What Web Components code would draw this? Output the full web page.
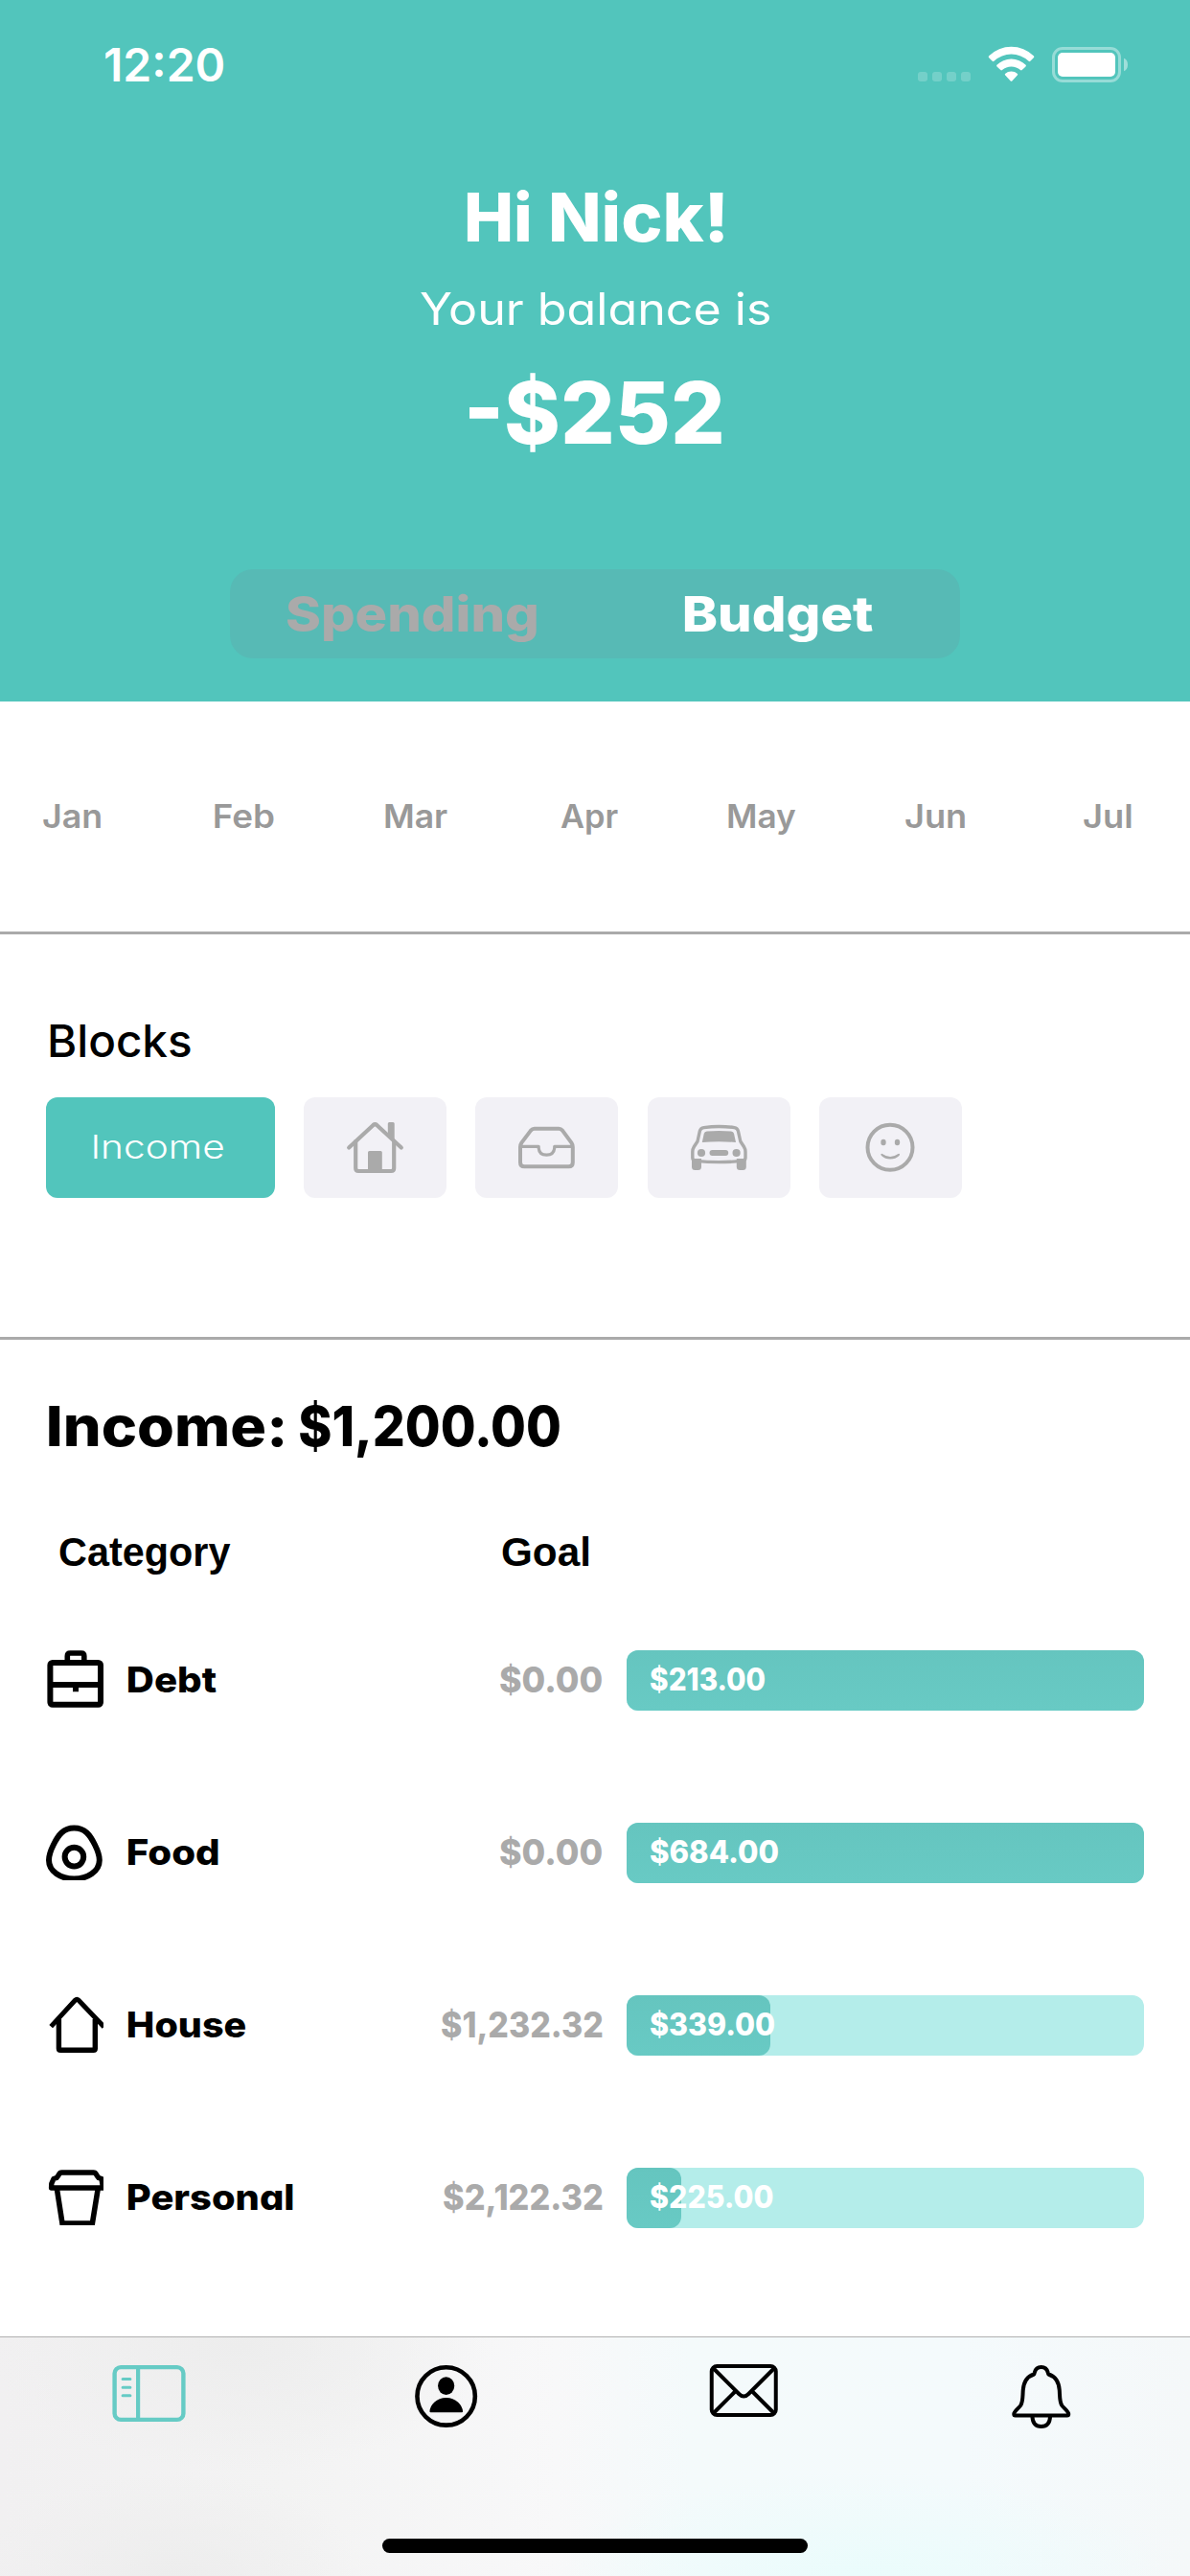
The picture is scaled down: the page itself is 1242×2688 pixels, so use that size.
<!DOCTYPE html>
<html lang="en">
<head>
<meta charset="utf-8">
<title>Budget</title>
<style>
html,body{margin:0;padding:0;background:#fff}
body{width:1242px;height:2688px;overflow:hidden;font-family:Inter,"Liberation Sans",sans-serif;color:#000}
</style>
</head>
<body>
<budget-app></budget-app>
<script>
const define = (name, html, setup) => customElements.define(name, class extends HTMLElement {
  constructor() {
    super();
    this.attachShadow({ mode: "open" });
  }
  connectedCallback() {
    const t = document.createElement("template");
    t.innerHTML = typeof html === "function" ? html(this) : html;
    this.shadowRoot.replaceChildren(t.content.cloneNode(true));
    if (setup) setup(this);
  }
});

/* One line of text whose drawn width is set by the "w" attribute. */
const ruler = document.createElement("canvas").getContext("2d");
const fontOf = el => ({
  size: +el.getAttribute("size"), weight: el.getAttribute("weight") || 400,
  family: el.getAttribute("family") || "Inter", w: +el.getAttribute("w")
});
define("fit-text", el => {
  const { size, weight, family, w } = fontOf(el);
  return `<style>
    :host{display:block;flex:none;width:${w}px;height:${size}px}
    span{display:block;width:max-content;white-space:nowrap;font:${weight} ${size}px/${size}px "${family}","Liberation Sans",sans-serif;
      font-feature-settings:${el.hasAttribute("geo") ? '"cv11"' : "normal"};transform-origin:0 0}
  </style><span>${el.getAttribute("text")}</span>`;
}, el => {
  const { size, weight, family, w } = fontOf(el);
  const span = el.shadowRoot.querySelector("span");
  ruler.font = `${weight} ${size}px "${family}"`;
  const m = ruler.measureText(el.getAttribute("text"));
  const advance = span.getBoundingClientRect().width || m.width;
  const k = w / (m.actualBoundingBoxRight + m.actualBoundingBoxLeft + advance - m.width);
  span.style.transform = `translateX(${m.actualBoundingBoxLeft * k}px) scaleX(${k})`;
});

define("status-bar", `<style>
  :host{display:flex;width:1242px;height:100px;box-sizing:border-box;padding:44px 65px 0 109.5px;justify-content:space-between;align-items:flex-start}
  svg{display:block}
  </style>
  <fit-text text="12:20" size="47.5" weight="600" w="123"></fit-text>
  <svg width="219" height="46" viewBox="958 44 219 46">
    <g fill="#fff" fill-opacity=".2"><rect x="958" y="75" width="10" height="10" rx="3"/><rect x="973" y="75" width="10" height="10" rx="3"/><rect x="988" y="75" width="10" height="10" rx="3"/><rect x="1003" y="75" width="10" height="10" rx="3"/></g>
    <g fill="#fff">
      <path d="M1032.2 58.2Q1031.2 59.2 1032.2 60.2L1035.7 63.8Q1036.5 64.6 1037.4 63.7A26.5 26.5 0 0 1 1073.6 63.7Q1074.5 64.6 1075.3 63.8L1078.8 60.2Q1079.8 59.2 1078.8 58.2A33.5 33.5 0 0 0 1032.2 58.2Z"/>
      <path d="M1040.4 67.8Q1039.7 68.6 1040.5 69.4L1044.3 73.1Q1045.1 73.9 1046 73.1A14.5 14.5 0 0 1 1065 73.1Q1065.9 73.9 1066.7 73.1L1070.5 69.4Q1071.3 68.6 1070.6 67.8A21.5 21.5 0 0 0 1040.4 67.8Z"/>
      <path d="M1049 77Q1048.4 77.8 1049.2 78.5L1054.7 84.4Q1055.5 85.2 1056.3 84.4L1061.8 78.5Q1062.6 77.8 1062 77A10 10 0 0 0 1049 77Z"/>
      <rect x="1104" y="55" width="60" height="25" rx="5"/>
      <path fill-opacity=".45" d="M1173 60.7Q1177 62.5 1177 67.5Q1177 72.5 1173 74.3Z"/>
    </g>
    <rect x="1099.5" y="50.5" width="69" height="34" rx="9.5" fill="none" stroke="#fff" stroke-opacity=".4" stroke-width="3"/>
  </svg>`);

define("segment-control", `<style>
  :host{display:flex;width:762px;height:93px;border-radius:24px;background:#57bab5}
  div{flex:1;display:flex;align-items:center;justify-content:center;color:#fff}
  .off{color:#aaa;padding-right:3px}
  </style><div class="off"><fit-text geo text="Spending" size="51" weight="800" w="261"></fit-text></div>
  <div><fit-text geo text="Budget" size="51" weight="800" w="197"></fit-text></div>`);

define("balance-header", `<style>
  :host{display:flex;flex-direction:column;align-items:center;height:732px;background:#52c5bc;color:#fff}
  .hi{display:flex;gap:22px;margin-top:91.5px}.label{margin-top:37.2px}.sum{margin-top:41.8px}segment-control{margin-top:118.5px}
  </style><status-bar></status-bar>
  <div class="hi"><fit-text text="Hi" size="70" weight="800" w="66"></fit-text>
  <fit-text text="Nick!" size="70" weight="800" w="180.5"></fit-text></div>
  <fit-text class="label" geo text="Your balance is" size="46" weight="400" w="364"></fit-text>
  <fit-text class="sum" geo text="-$252" size="89" weight="800" w="263"></fit-text>
  <segment-control></segment-control>`);

const months = [["Jan", 60], ["Feb", 62.5], ["Mar", 65.5], ["Apr", 60.5], ["May", 70.5], ["Jun", 62], ["Jul", 49.5]];
define("month-strip", `<style>
  :host{display:block;height:240px;border-bottom:3px solid #aaa;overflow:hidden;color:#999}
  .row{display:flex;margin:103.2px 0 0 -15.3px;width:1280px}
  .m{width:180.2px;flex:none;display:flex;justify-content:center}
  </style><div class="row">${months.map(([t, w]) => `<div class="m"><fit-text text="${t}" size="34.5" weight="600" w="${w}"></fit-text></div>`).join("")}</div>`);

const blockArt = {
  house: `<g fill="none" stroke="#aaa" stroke-width="4.2" stroke-linecap="round" stroke-linejoin="round"><path d="M47.2 52.5L72.3 29.2Q74.4 27.4 76.5 29.2L101.8 52.5"/><path d="M54.2 46V74Q54.2 77 57.2 77H91.2Q94.2 77 94.2 74V46"/></g><path fill="#aaa" d="M87.8 39V27.5Q87.8 26 89.3 26H93.2Q94.7 26 94.7 27.5V46ZM67 77V57.5Q67 56 68.5 56H80.3Q81.8 56 81.8 57.5V77Z"/>`,
  tray: `<g fill="none" stroke="#aaa" stroke-width="4" stroke-linejoin="round"><path d="M47 52Q47 49.5 48.4 47.4L58 34.6Q59.5 32.8 61.8 32.8H87.2Q89.5 32.8 91 34.6L100.4 47.4Q101.8 49.5 101.8 52V68Q101.8 72.3 97.5 72.3H51.3Q47 72.3 47 68Z"/><path stroke-width="3.2" d="M47 51.4H66.2V53.2Q66.8 60.2 74.4 60.2Q82 60.2 82.7 53.2V51.4H101.8"/></g>`,
  car: `<path fill="none" stroke="#aaa" stroke-width="3.4" stroke-linejoin="round" d="M58.5 31.6Q74.4 29.4 90.5 31.6Q93.6 32 94.4 35.2L96.8 46L100.4 51.5Q102 54 102 57V63Q102 66 98.8 66.4Q74.4 68.8 50 66.4Q46.8 66 46.8 63V57Q46.8 54 48.4 51.5L52 46L54.4 35.2Q55.2 32 58.5 31.6Z"/><g fill="#aaa"><path d="M61.8 35.5Q74.4 34.4 87 35.5Q89.5 35.8 90 37.8L92 47Q74.4 45.6 56.8 47L58.8 37.8Q59.3 35.8 61.8 35.5Z"/><circle cx="56" cy="58" r="4.1"/><circle cx="92.6" cy="58" r="4.1"/><rect x="64.5" y="55" width="19.7" height="6" rx="3"/><path d="M46 64H56V72.5Q56 76 52.5 76H49.5Q46 76 46 72.5ZM92.8 64H102.8V72.5Q102.8 76 99.3 76H96.3Q92.8 76 92.8 72.5Z"/></g>`,
  smile: `<circle cx="74" cy="52.3" r="23.5" fill="none" stroke="#aaa" stroke-width="4"/><g fill="#aaa"><ellipse cx="67" cy="47" rx="2.7" ry="3.2"/><ellipse cx="81.5" cy="47" rx="2.7" ry="3.2"/><path d="M64.4 59.2Q65.2 58.2 66.3 59.3Q74.2 64.8 82 59.3Q83.2 58.2 84 59.2Q84.2 60 83.4 61Q79.6 64.6 74.2 64.6Q68.8 64.6 65 61Q64.2 60 64.4 59.2Z"/></g>`
};
define("block-tile", el => `<style>
  :host{display:block;width:149px;height:105px;border-radius:12px;background:#f2f1f6}svg{display:block}
  </style><svg width="149" height="105" viewBox="0 0 149 105">${blockArt[el.getAttribute("kind")]}</svg>`);

define("block-picker", `<style>
  :host{display:block;box-sizing:border-box;height:423px;padding:87.8px 0 0 48px;border-bottom:3px solid #aaa}
  .title{margin-left:3.5px}
  .tiles{display:flex;gap:30.2px;margin-top:35.7px}
  .on{width:239px;height:105px;border-radius:12px;background:#52c5bc;color:#fff;display:flex;align-items:center;justify-content:center}
  .on fit-text{margin:0 3px 0 0}
  </style><fit-text class="title" text="Blocks" size="46.5" weight="500" w="146.5"></fit-text>
  <div class="tiles"><div class="on"><fit-text geo text="Income" size="34.5" weight="300" w="135.5"></fit-text></div>
  <block-tile kind="house"></block-tile><block-tile kind="tray"></block-tile><block-tile kind="car"></block-tile><block-tile kind="smile"></block-tile></div>`);

const rowArt = {
  debt: `<rect x="4.4" y="13" width="52.6" height="43.8" rx="2.5"/><path d="M22.3 12V6Q22.3 3 25.3 3H36.8Q39.8 3 39.8 6V12" stroke-width="5.6"/><path d="M4 36H57M31 36V43.3"/>`,
  food: `<path d="M29.3 5.6C41 5.6 46 13 51 23C54 29 55.8 33 55.8 39C55.8 51 43 58.6 29.3 58.6S3 51 3 39C3 33 4.8 29 7.8 23C12.8 13 18 5.6 29.3 5.6Z"/><circle cx="29.4" cy="35.6" r="9.8"/>`,
  house: `<path stroke-width="5" d="M5.2 32.6L30.6 5Q32.2 3.4 33.8 5L60.5 33"/><path stroke-width="5.4" d="M13.4 25V55.5Q13.4 57.3 15.2 57.3H49.5Q51.3 57.3 51.3 55.5V25"/>`,
  personal: `<path stroke-width="5.4" d="M5.6 21L5.8 16.5L8 11.5L11 10.5Q12.5 9 13.5 7Q14.5 5 16.5 5H49.5Q51.5 5 52.5 7Q53.5 9 55 10.5L58 11.5L59.5 21Z"/><path stroke-width="5.6" stroke-linejoin="miter" d="M11.4 22L17 58H48.4L54.2 22"/>`
};
define("budget-row", el => {
  const a = n => el.getAttribute(n);
  return `<style>
  :host{display:flex;align-items:center;height:180px;padding-left:48px}
  svg{display:block;flex:none;margin:0 26px 3px 0}
  .pair{width:494px;flex:none;display:flex;justify-content:space-between;margin-bottom:2px}
  .goal{color:#aaa}
  .bar{position:relative;width:540px;height:63px;margin-left:26px;border-radius:12px;background:#b4edea;display:flex;align-items:center}
  .fill{position:absolute;left:0;top:0;height:100%;width:${a("fill")}px;border-radius:12px;background:linear-gradient(#65c5bf,#68cac4)}
  .bar fit-text{position:relative;margin:0 0 1px 25px;color:#fff}
  </style>
  <svg width="60" height="60" viewBox="0 0 60 60" fill="none" stroke="#000" stroke-width="6" stroke-linejoin="round">${rowArt[a("kind")]}</svg>
  <div class="pair"><fit-text geo text="${a("name")}" size="37" weight="800" w="${a("name-w")}"></fit-text>
  <fit-text class="goal" text="${a("goal")}" size="37" weight="800" w="${a("goal-w")}"></fit-text></div>
  <div class="bar"><div class="fill"></div><fit-text text="${a("spent")}" size="32" weight="800" w="${a("spent-w")}"></fit-text></div>`;
});

define("budget-list", `<style>
  :host{display:block;padding-top:60.9px}
  .title{display:flex;gap:17px;margin-left:51px}
  .head{display:flex;margin:81.5px 0 22.1px 62px;gap:283.5px}
  </style><div class="title"><fit-text text="Income:" size="58" weight="800" w="244.5"></fit-text>
  <fit-text text="$1,200.00" size="58" weight="800" w="271"></fit-text></div>
  <div class="head"><fit-text text="Category" family="Liberation Sans" size="43" weight="700" w="178.5"></fit-text>
  <fit-text text="Goal" family="Liberation Sans" size="43" weight="700" w="90"></fit-text></div>
  <budget-row kind="debt" name="Debt" name-w="92" goal="$0.00" goal-w="106.5" spent="$213.00" spent-w="119" fill="540"></budget-row>
  <budget-row kind="food" name="Food" name-w="94" goal="$0.00" goal-w="106.5" spent="$684.00" spent-w="133" fill="540"></budget-row>
  <budget-row kind="house" name="House" name-w="122" goal="$1,232.32" goal-w="167.5" spent="$339.00" spent-w="129" fill="150"></budget-row>
  <budget-row kind="personal" name="Personal" name-w="172" goal="$2,122.32" goal-w="165.5" spent="$225.00" spent-w="127.5" fill="57"></budget-row>`);

define("tab-bar", `<style>
  :host{display:flex;flex-direction:column;align-items:center;box-sizing:border-box;width:1242px;height:250px;border-top:1px solid #b0b0b0;
    background:radial-gradient(ellipse 330px 110px at 900px 250px,#eafcfc,rgba(234,252,252,0)),radial-gradient(ellipse 260px 130px at 250px 10px,#ededed,rgba(237,237,237,0)),radial-gradient(ellipse 200px 110px at 180px 250px,#ededed,rgba(237,237,237,0)),linear-gradient(90deg,#f1f0f1 0,#f3f3f3 300px,#f8f8f9 580px,#f4fafb 720px,#f4fafc 1000px,#f5f8f9 1242px)}
  .tabs{display:flex;width:1242px;height:210px}
  .tabs div{flex:1;display:flex;justify-content:center;padding-top:27px}
  svg{display:block}
  .home{width:444px;height:15px;border-radius:8px;background:#000}
  </style>
  <div class="tabs">
  <div><svg width="78" height="70" viewBox="116.5 2466 78 70" fill="none" stroke="#66cbc5"><rect x="120.1" y="2470.1" width="71.8" height="54.8" rx="6.5" stroke-width="4.4"/><path stroke-width="4.2" d="M144.6 2470V2525"/><path stroke-width="3" stroke-linecap="round" d="M128.6 2482.6H136.4M128.6 2491.2H136.4M128.6 2499.8H136.4"/></svg></div>
  <div><svg width="70" height="70" viewBox="430.75 2466 70 70"><circle cx="465.4" cy="2500.4" r="30.2" fill="none" stroke="#000" stroke-width="4.6"/><ellipse cx="465.4" cy="2489.6" rx="8.6" ry="9.4"/><path d="M448.2 2516.2Q448.6 2511 453 2506.8Q458 2502 465.4 2502Q472.8 2502 477.9 2506.8Q482.3 2511 482.8 2516.2Q482.8 2517.2 481.8 2517.2H449.2Q448.2 2517.2 448.2 2516.2Z"/></svg></div>
  <div><svg width="74" height="70" viewBox="739.25 2466 74 70" fill="none" stroke="#000" stroke-width="4" stroke-linejoin="round"><rect x="743" y="2469" width="67" height="51" rx="5.5"/><path d="M744.5 2471L771.5 2498Q776.5 2503 781.5 2498L808.5 2471M744.5 2518.5L767.5 2495.5M808.5 2518.5L785.5 2495.5"/></svg></div>
  <div><svg width="66" height="70" viewBox="1053.75 2466 66 70" fill="none" stroke="#000" stroke-width="4" stroke-linejoin="round"><path d="M1086.5 2470Q1092 2470 1093.4 2475.5L1094 2477.5C1102 2480 1105 2487 1105.5 2494C1106 2501 1105.500 2506 1108 2510C1110 2513 1115 2516 1115 2519Q1115 2520.5 1113.500 2520.5H1059.500Q1058 2520.500 1058 2519C1058 2516 1063 2513 1065 2510C1067.500 2506 1067 2501 1067.500 2494C1068 2487 1071 2480 1079 2477.500L1079.600 2475.500Q1081 2470 1086.500 2470Z"/><path d="M1077.200 2521.500Q1077.600 2532 1086.500 2532Q1095.400 2532 1095.800 2521.500"/></svg></div>
  </div><div class="home"></div>`);

define("budget-app", `<style>
  :host{display:flex;flex-direction:column;width:1242px;height:2688px;background:#fff}
  balance-header,month-strip,block-picker,budget-list,tab-bar{flex:none}
  tab-bar{margin-top:auto}
  </style><balance-header></balance-header><month-strip></month-strip><block-picker></block-picker><budget-list></budget-list><tab-bar></tab-bar>`);
</script>
</body>
</html>
